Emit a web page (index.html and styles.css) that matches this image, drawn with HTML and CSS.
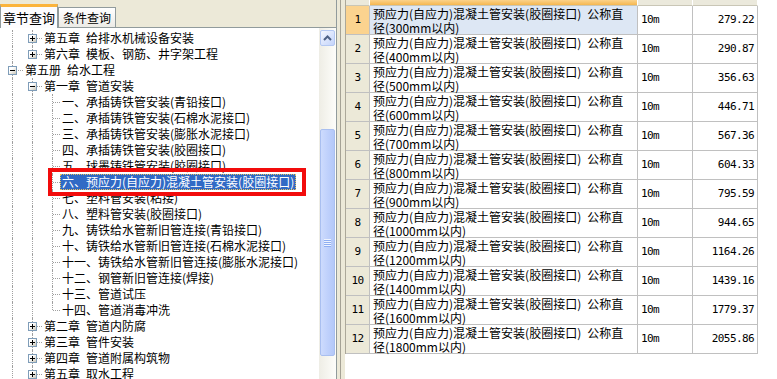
FILE: index.html
```html
<!DOCTYPE html>
<html lang="zh-CN">
<head>
  <meta charset="UTF-8" />
  <title>定额查询</title>
  <link rel="stylesheet" href="styles.css">
</head>
<body>
  <div class="app">
    <div class="left">
      <div class="tabs">
        <div class="tab active">章节查询</div>
        <div class="tab">条件查询</div>
      </div>
      <div class="panel">
        <div class="tree">
          <div class="row"><span class="g v"></span><span class="g x w19"><span class="box plus"></span></span><span class="lbl">第五章&ensp;给排水机械设备安装</span></div>
          <div class="row"><span class="g v"></span><span class="g x last w19"><span class="box plus"></span></span><span class="lbl">第六章&ensp;模板、钢筋、井字架工程</span></div>
          <div class="row"><span class="g x"><span class="box"></span></span><span class="lbl">第五册&ensp;给水工程</span></div>
          <div class="row"><span class="g v"></span><span class="g x w19"><span class="box"></span></span><span class="lbl">第一章&ensp;管道安装</span></div>
          <div class="row"><span class="g v"></span><span class="g v"></span><span class="g t"></span><span class="lbl">一、承插铸铁管安装(青铅接口)</span></div>
          <div class="row"><span class="g v"></span><span class="g v"></span><span class="g t"></span><span class="lbl">二、承插铸铁管安装(石棉水泥接口)</span></div>
          <div class="row"><span class="g v"></span><span class="g v"></span><span class="g t"></span><span class="lbl">三、承插铸铁管安装(膨胀水泥接口)</span></div>
          <div class="row"><span class="g v"></span><span class="g v"></span><span class="g t"></span><span class="lbl">四、承插铸铁管安装(胶圈接口)</span></div>
          <div class="row"><span class="g v"></span><span class="g v"></span><span class="g t"></span><span class="lbl">五、球墨铸铁管安装(胶圈接口)</span></div>
          <div class="row"><span class="g v"></span><span class="g v"></span><span class="g t"></span><span class="lbl sel">六、预应力(自应力)混凝土管安装(胶圈接口)</span></div>
          <div class="row"><span class="g v"></span><span class="g v"></span><span class="g t"></span><span class="lbl">七、塑料管安装(粘接)</span></div>
          <div class="row"><span class="g v"></span><span class="g v"></span><span class="g t"></span><span class="lbl">八、塑料管安装(胶圈接口)</span></div>
          <div class="row"><span class="g v"></span><span class="g v"></span><span class="g t"></span><span class="lbl">九、铸铁给水管新旧管连接(青铅接口)</span></div>
          <div class="row"><span class="g v"></span><span class="g v"></span><span class="g t"></span><span class="lbl">十、铸铁给水管新旧管连接(石棉水泥接口)</span></div>
          <div class="row"><span class="g v"></span><span class="g v"></span><span class="g t"></span><span class="lbl">十一、铸铁给水管新旧管连接(膨胀水泥接口)</span></div>
          <div class="row"><span class="g v"></span><span class="g v"></span><span class="g t"></span><span class="lbl">十二、钢管新旧管连接(焊接)</span></div>
          <div class="row"><span class="g v"></span><span class="g v"></span><span class="g t"></span><span class="lbl">十三、管道试压</span></div>
          <div class="row"><span class="g v"></span><span class="g v"></span><span class="g t end"></span><span class="lbl">十四、管道消毒冲洗</span></div>
          <div class="row"><span class="g v"></span><span class="g x w19"><span class="box plus"></span></span><span class="lbl">第二章&ensp;管道内防腐</span></div>
          <div class="row"><span class="g v"></span><span class="g x w19"><span class="box plus"></span></span><span class="lbl">第三章&ensp;管件安装</span></div>
          <div class="row"><span class="g v"></span><span class="g x w19"><span class="box plus"></span></span><span class="lbl">第四章&ensp;管道附属构筑物</span></div>
          <div class="row"><span class="g v"></span><span class="g x w19"><span class="box plus"></span></span><span class="lbl">第五章&ensp;取水工程</span></div>
        </div>
        <div class="vscroll">
          <div class="vs-btn">
            <svg width="9" height="6" viewBox="0 0 9 6"><polyline points="1,5 4.5,1.5 8,5" fill="none" stroke="#4d6185" stroke-width="2"/></svg>
          </div>
          <div class="vs-thumb"><div class="grip"></div></div>
        </div>
      </div>
    </div>

    <div class="split"></div>

    <div class="right">
      <div class="grid">
        <div class="h"></div><div class="h on"></div><div class="h"></div><div class="h"></div>

        <div class="n on">1</div><div class="c on">预应力(自应力)混凝土管安装(胶圈接口)&ensp;公称直<br>径(300mm以内)</div><div class="u">10m</div><div class="p">279.22</div>
        <div class="n">2</div><div class="c">预应力(自应力)混凝土管安装(胶圈接口)&ensp;公称直<br>径(400mm以内)</div><div class="u">10m</div><div class="p">290.87</div>
        <div class="n">3</div><div class="c">预应力(自应力)混凝土管安装(胶圈接口)&ensp;公称直<br>径(500mm以内)</div><div class="u">10m</div><div class="p">356.63</div>
        <div class="n">4</div><div class="c">预应力(自应力)混凝土管安装(胶圈接口)&ensp;公称直<br>径(600mm以内)</div><div class="u">10m</div><div class="p">446.71</div>
        <div class="n">5</div><div class="c">预应力(自应力)混凝土管安装(胶圈接口)&ensp;公称直<br>径(700mm以内)</div><div class="u">10m</div><div class="p">567.36</div>
        <div class="n">6</div><div class="c">预应力(自应力)混凝土管安装(胶圈接口)&ensp;公称直<br>径(800mm以内)</div><div class="u">10m</div><div class="p">604.33</div>
        <div class="n">7</div><div class="c">预应力(自应力)混凝土管安装(胶圈接口)&ensp;公称直<br>径(900mm以内)</div><div class="u">10m</div><div class="p">795.59</div>
        <div class="n">8</div><div class="c">预应力(自应力)混凝土管安装(胶圈接口)&ensp;公称直<br>径(1000mm以内)</div><div class="u">10m</div><div class="p">944.65</div>
        <div class="n">9</div><div class="c">预应力(自应力)混凝土管安装(胶圈接口)&ensp;公称直<br>径(1200mm以内)</div><div class="u">10m</div><div class="p">1164.26</div>
        <div class="n">10</div><div class="c">预应力(自应力)混凝土管安装(胶圈接口)&ensp;公称直<br>径(1400mm以内)</div><div class="u">10m</div><div class="p">1439.16</div>
        <div class="n">11</div><div class="c">预应力(自应力)混凝土管安装(胶圈接口)&ensp;公称直<br>径(1600mm以内)</div><div class="u">10m</div><div class="p">1779.37</div>
        <div class="n">12</div><div class="c">预应力(自应力)混凝土管安装(胶圈接口)&ensp;公称直<br>径(1800mm以内)</div><div class="u">10m</div><div class="p">2055.86</div>
      </div>
    </div>
  </div>

  <!-- red highlight drawn over the selected node -->
  <div class="mark"></div>
</body>
</html>
```

FILE: styles.css
```css
body {
  margin: 0;
  background: #ece9d8;
  font-family: "Noto Sans CJK SC", sans-serif;
  font-size: 12px;
  color: #000;
  overflow: hidden;
}
.app {
  display: flex;
  height: 379px;
}

/* left: tab control with tree */
.left {
  width: 337px;
  flex: none;
  display: flex;
  flex-direction: column;
  border-right: 1px solid #919b9c;
  box-sizing: border-box;
}
.tabs {
  height: 27px;
  flex: none;
  display: flex;
  align-items: flex-end;
}
.tab {
  height: 19px;
  line-height: 19px;
  padding: 0 4px;
  border: 1px solid #919b9c;
  border-bottom: none;
  background: linear-gradient(#fff, #ecebe6);
}
.tab.active {
  height: 21px;
  line-height: 22px;
  padding: 0 2px;
  font-size: 13px;
  border-top: 3px solid #fbb43c;
  background: #fcfcfe;
  margin-bottom: -1px;
  position: relative;
  z-index: 1;
}
.panel {
  flex: 1;
  min-height: 0;
  display: flex;
  background: #fff;
  border-top: 1px solid #919b9c;
  overflow: hidden;
}
.tree {
  flex: 1;
  padding: 2px 0 0 3px;
  overflow: hidden;
}
.row {
  display: flex;
  height: 16px;
  white-space: nowrap;
}
.g {
  width: 20px;
  height: 16px;
  flex: none;
  position: relative;
}
.g.w19 { width: 19px; }
.g.t { width: 17px; }
.g.v::before,
.g.t::before,
.g.x::before {
  content: "";
  position: absolute;
  left: 9px;
  top: 0;
  bottom: 0;
  border-left: 1px dotted #a0a0a0;
}
.g.t.end::before,
.g.x.last::before {
  bottom: 8px;
}
.g.t::after,
.g.x::after {
  content: "";
  position: absolute;
  left: 10px;
  right: 0;
  top: 8px;
  border-top: 1px dotted #a0a0a0;
}
.box {
  position: absolute;
  left: 5px;
  top: 4px;
  width: 9px;
  height: 9px;
  box-sizing: border-box;
  border: 1px solid #7f9db9;
  background: linear-gradient(135deg, #fff 35%, #c9c5b6);
  z-index: 1;
}
.box::before {
  content: "";
  position: absolute;
  left: 1px;
  top: 3px;
  width: 5px;
  height: 1px;
  background: #000;
}
.box.plus::after {
  content: "";
  position: absolute;
  left: 3px;
  top: 1px;
  width: 1px;
  height: 5px;
  background: #000;
}
.lbl {
  padding: 0 2px;
  line-height: 16px;
  height: 16px;
}
.lbl.sel {
  background: #316ac5;
  color: #fff;
  outline: 1px dotted #e8c060;
  outline-offset: -1px;
}

/* scrollbar */
.vscroll {
  width: 17px;
  flex: none;
  background: linear-gradient(to right, #eeede5, #fdfdfa);
  padding: 2px 1px 0;
  box-sizing: border-box;
}
.vs-btn {
  height: 16px;
  box-sizing: border-box;
  border: 1px solid #b4c8f2;
  border-radius: 2px;
  background: linear-gradient(135deg, #f4f7fe, #c4d4fb);
  display: flex;
  align-items: center;
  justify-content: center;
}
.vs-thumb {
  margin-top: 83px;
  height: 227px;
  box-sizing: border-box;
  border: 1px solid #a9bff0;
  border-radius: 2px;
  background: linear-gradient(to right, #cddbfd, #bdcffb 60%, #b4c8f8);
  display: flex;
  align-items: center;
  justify-content: center;
}
.grip {
  width: 7px;
  height: 8px;
  background: repeating-linear-gradient(#eef3fe 0 1px, #8eaef2 1px 2px);
}

.split {
  width: 8px;
  flex: none;
  background: linear-gradient(to right, #ece9d8 3px, #a5a295 3px, #a5a295 4px, #ece9d8 4px);
}

/* right: quota grid */
.right {
  flex: 1;
  background: #fff;
  overflow: hidden;
}
.grid {
  display: grid;
  grid-template-columns: 24px 268px 55px 65px;
  width: max-content;
  border-left: 1px solid #aca899;
}
.grid > div {
  box-sizing: border-box;
  border-right: 1px solid #c0c0c0;
  border-bottom: 1px solid #c0c0c0;
  height: 29px;
  white-space: nowrap;
}
.grid > .h {
  height: 6px;
  background: #ebe9dc;
  border-right-color: #fff;
  border-bottom-color: #c9c6b6;
}
.grid > .h.on {
  background: linear-gradient(#fbd28a, #f5b750);
}
.n {
  background: #ece9d8;
  text-align: center;
  line-height: 28px;
  font-family: "DejaVu Sans Mono", monospace;
  font-size: 11px;
  letter-spacing: -0.5px;
}
.n.on {
  background: #fbd38f;
}
.c {
  padding: 1px 3px 0;
  line-height: 14px;
}
.c.on {
  background: #dde7f4;
}
.u,
.p {
  line-height: 28px;
  padding: 0 3px;
  font-family: "DejaVu Sans Mono", monospace;
  font-size: 11px;
  letter-spacing: -0.6px;
}
.p {
  text-align: right;
}

.mark {
  position: absolute;
  left: 48px;
  top: 168px;
  width: 258px;
  height: 28px;
  box-sizing: border-box;
  border: 4px solid #f20c0c;
}
```
